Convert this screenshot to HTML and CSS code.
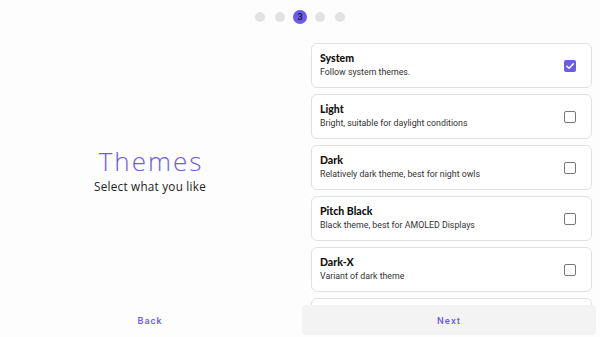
FILE: index.html
```html
<!DOCTYPE html>
<html lang="en">
<head>
<meta charset="utf-8">
<title>Themes</title>
<link rel="stylesheet" href="styles.css">
</head>
<body>
<div class="page">
  <div class="stepper">
    <span class="dot"></span>
    <span class="dot"></span>
    <span class="dot active">3</span>
    <span class="dot"></span>
    <span class="dot"></span>
  </div>
  <div class="content">
    <div class="intro">
      <h1 class="title">Themes</h1>
      <p class="subtitle">Select what you like</p>
    </div>
    <div class="list">
      <div class="card">
        <div class="card-text">
          <div class="card-title">System</div>
          <div class="card-desc">Follow system themes.</div>
        </div>
        <span class="check checked"><svg viewBox="0 0 12 12" width="12" height="12"><path d="M2.8 6.2 L5 8.2 L9.3 3.9" fill="none" stroke="#fff" stroke-width="1.5" stroke-linecap="round" stroke-linejoin="round"/></svg></span>
      </div>
      <div class="card">
        <div class="card-text">
          <div class="card-title">Light</div>
          <div class="card-desc">Bright, suitable for daylight conditions</div>
        </div>
        <span class="check"></span>
      </div>
      <div class="card">
        <div class="card-text">
          <div class="card-title">Dark</div>
          <div class="card-desc">Relatively dark theme, best for night owls</div>
        </div>
        <span class="check"></span>
      </div>
      <div class="card">
        <div class="card-text">
          <div class="card-title">Pitch Black</div>
          <div class="card-desc">Black theme, best for AMOLED Displays</div>
        </div>
        <span class="check"></span>
      </div>
      <div class="card">
        <div class="card-text">
          <div class="card-title">Dark-X</div>
          <div class="card-desc">Variant of dark theme</div>
        </div>
        <span class="check"></span>
      </div>
      <div class="card"></div>
    </div>
  </div>
  <div class="footer">
    <button class="btn">Back</button>
    <button class="btn btn-next">Next</button>
  </div>
</div>
</body>
</html>
```
FILE: styles.css
```css
* { box-sizing: border-box; }
html, body { margin: 0; padding: 0; }
body {
  width: 600px;
  height: 337px;
  background: #fdfdfd;
  font-family: Roboto, "Liberation Sans", sans-serif;
  overflow: hidden;
}
.page {
  height: 337px;
  display: flex;
  flex-direction: column;
}
.stepper {
  height: 34px;
  flex: none;
  display: flex;
  justify-content: center;
  align-items: center;
  gap: 10px;
}
.dot {
  width: 10px;
  height: 10px;
  border-radius: 50%;
  background: #e2e2e2;
  display: flex;
  align-items: center;
  justify-content: center;
}
.dot.active {
  width: 14px;
  height: 14px;
  margin: 0 -2px;
  background: #6b5ce6;
  color: #1a1440;
  font-size: 9px;
  line-height: 9px;
  font-weight: 500;
}
.content {
  flex: 1;
  min-height: 0;
  display: grid;
  grid-template-columns: 300px 300px;
}
.intro {
  display: flex;
  flex-direction: column;
  align-items: center;
  justify-content: center;
  gap: 4px;
  padding-bottom: 0;
}
.title {
  margin: 0 -2px 0 0;
  font-family: "Open Sans", sans-serif;
  font-weight: 300;
  font-size: 26px;
  line-height: 28px;
  color: #6b5ce6;
  letter-spacing: 2px;
}
.subtitle {
  margin: 0;
  font-family: "Open Sans", sans-serif;
  font-size: 11.7px;
  line-height: 14px;
  color: #222;
  letter-spacing: 0.25px;
}
.list {
  overflow: hidden;
  padding: 9px 8px 0 11px;
  display: flex;
  flex-direction: column;
  gap: 6px;
}
.card {
  flex: none;
  height: 45px;
  border: 1px solid #e0e0e0;
  border-radius: 6px;
  background: #fff;
  display: flex;
  align-items: center;
  justify-content: space-between;
  padding: 0 15px 0 8px;
}
.card-title {
  font-family: Lato, "Open Sans", sans-serif;
  font-weight: 900;
  font-size: 10.5px;
  line-height: 13px;
  color: #111;
}
.card-desc {
  font-size: 8.8px;
  line-height: 15px;
  color: #333;
}
.check {
  width: 12px;
  height: 12px;
  border: 1.5px solid #777;
  border-radius: 2px;
}
.check.checked {
  border: none;
  background: #6b5ce6;
  display: flex;
}
.footer {
  flex: none;
  height: 32px;
  display: grid;
  grid-template-columns: 300px 300px;
  padding-bottom: 2px;
}
.btn {
  border: none;
  background: transparent;
  font-family: Roboto, sans-serif;
  font-weight: 500;
  font-size: 9.5px;
  letter-spacing: 1px;
  color: #6b5ce6;
  padding: 0;
}
.btn-next {
  background: #f3f3f3;
  border-radius: 4px;
  margin: 0 4px 0 2px;
}
```
